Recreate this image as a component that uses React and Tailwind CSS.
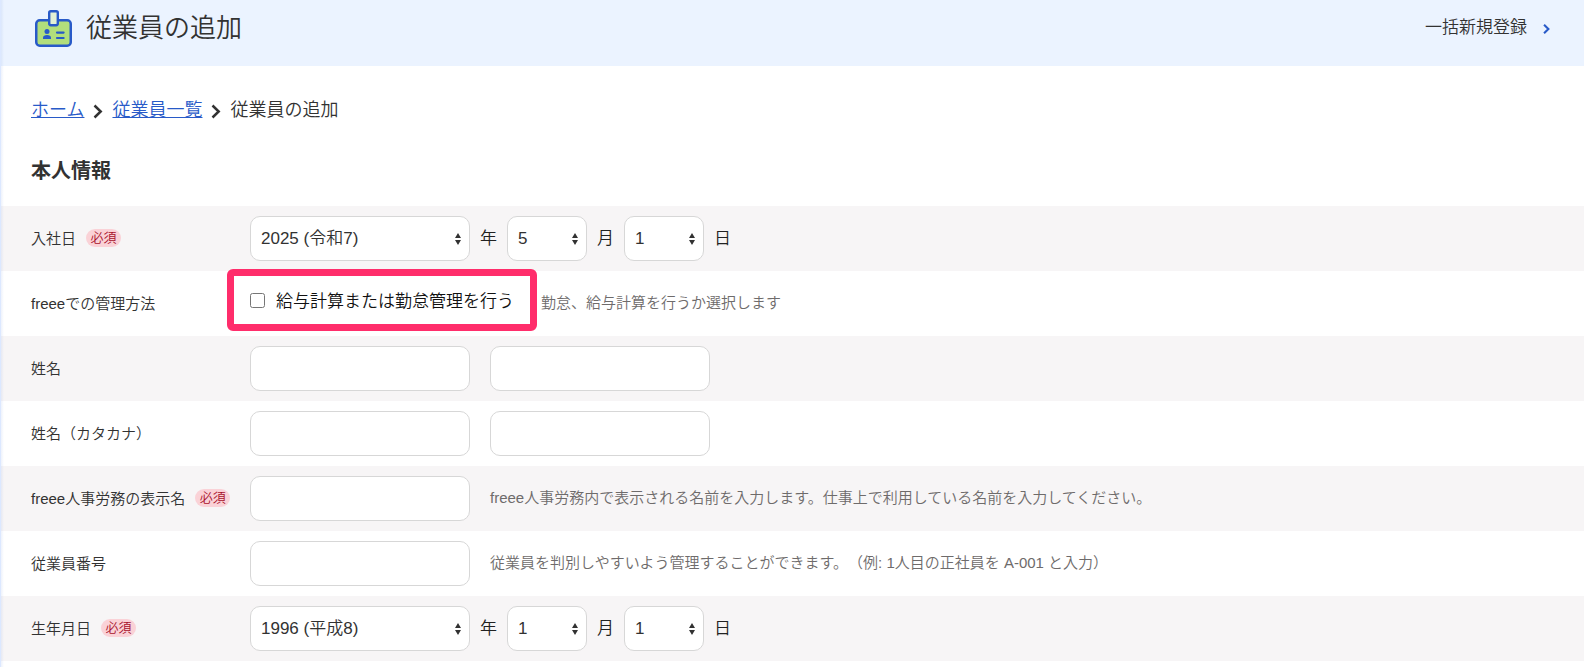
import React, { useState } from 'react';

const years = [
  { value: '2025', label: '2025 (令和7)' },
  { value: '2024', label: '2024 (令和6)' },
  { value: '1996', label: '1996 (平成8)' },
  { value: '1995', label: '1995 (平成7)' },
];
const months = Array.from({ length: 12 }, (_, i) => ({ value: `${i + 1}`, label: `${i + 1}` }));
const days = Array.from({ length: 31 }, (_, i) => ({ value: `${i + 1}`, label: `${i + 1}` }));

function BadgeIcon() {
  return (
    <svg width="37" height="37" viewBox="0 0 37 37" fill="none" className="shrink-0" aria-hidden="true">
      <rect x="1.25" y="10.25" width="34.5" height="25.5" rx="3.5" fill="#b2de7c" stroke="#285ac8" strokeWidth="2.5" />
      <rect x="14.2" y="1.2" width="8.6" height="14" rx="1.6" fill="#e3f1d5" stroke="#285ac8" strokeWidth="2.4" />
      <circle cx="12" cy="21.5" r="2.5" fill="#285ac8" />
      <path d="M8 29v-1.2c0-1.8 1.6-2.8 4-2.8s4 1 4 2.8V29z" fill="#285ac8" />
      <path d="M22 22.6h6.6M22 28h6.6" stroke="#285ac8" strokeWidth="2.2" strokeLinecap="round" />
    </svg>
  );
}

function Chevron({ className, width, height, strokeWidth }) {
  return (
    <svg width={width} height={height} viewBox="0 0 10 14" fill="none" className={className} aria-hidden="true">
      <path d="M1.5 1l6.2 6-6.2 6" stroke="currentColor" strokeWidth={strokeWidth} />
    </svg>
  );
}

function SelectBox({ label, options, value, onChange, className }) {
  return (
    <div className={`relative ${className}`}>
      <select
        aria-label={label}
        value={value}
        onChange={(e) => onChange(e.target.value)}
        className="h-[45px] w-full appearance-none rounded-[10px] border border-[#d7d7d7] bg-white pl-2.5 pr-5 text-[17px] text-[#323232]"
      >
        {options.map((option) => (
          <option key={option.value} value={option.value}>{option.label}</option>
        ))}
      </select>
      <svg width="6" height="12" viewBox="0 0 6 12" className="pointer-events-none absolute right-[9px] top-[17px]" aria-hidden="true">
        <path d="M3 0l3 5H0zM3 12L0 7h6z" fill="#323232" />
      </svg>
    </div>
  );
}

function DateFields({ name, initial }) {
  const [date, setDate] = useState(initial);

  return (
    <div className="flex items-center gap-2.5 text-[17px] leading-6 text-[#222222]">
      <SelectBox label={`${name} 年`} options={years} value={date.year} onChange={(year) => setDate(prev => ({ ...prev, year }))} className="w-[220px]" />
      <span>年</span>
      <SelectBox label={`${name} 月`} options={months} value={date.month} onChange={(month) => setDate(prev => ({ ...prev, month }))} className="w-20" />
      <span>月</span>
      <SelectBox label={`${name} 日`} options={days} value={date.day} onChange={(day) => setDate(prev => ({ ...prev, day }))} className="w-20" />
      <span>日</span>
    </div>
  );
}

function TextBox(props) {
  return (
    <input
      type="text"
      className="h-[45px] w-[220px] rounded-[10px] border border-[#d7d7d7] bg-white px-2.5 text-[17px] text-[#323232]"
      {...props}
    />
  );
}

function Hint({ children }) {
  return <p className="pb-0.5 text-[15px] leading-6 text-[#6e6b6b]">{children}</p>;
}

function Row({ label, htmlFor, required, children }) {
  const Label = htmlFor ? 'label' : 'span';
  return (
    <div className="flex h-[65px] items-center pl-[31px] odd:bg-[#f7f5f6]">
      <div className="flex w-[219px] shrink-0 items-center gap-2.5 whitespace-nowrap">
        <Label htmlFor={htmlFor} className="text-[15px] leading-6 text-[#323232]">{label}</Label>
        {required && (
          <span className="mb-0.5 h-[18px] w-[35px] rounded-full bg-[#fad2d7] text-center text-[13px] leading-[18px] text-[#a8112b]">必須</span>
        )}
      </div>
      <div className="flex items-center gap-5">{children}</div>
    </div>
  );
}

function App() {
  const [managed, setManaged] = useState(false);

  return (
    <div className="relative min-h-screen bg-white font-['Liberation_Sans','Noto_Sans_CJK_JP',sans-serif] font-[350] text-[#323232] [text-spacing-trim:space-all]" lang="ja">
      {/* Edge of the side menu */}
      <div className="absolute inset-y-0 left-0 w-1 border-l border-[#dce8ff] bg-linear-to-r from-[#285ac8]/8 to-transparent" />

      {/* Page header */}
      <header className="flex h-[66px] items-center justify-between bg-[#ebf3ff] pb-2.5 pl-[35px] pr-[34px]">
        <div className="flex items-center gap-3.5">
          <BadgeIcon />
          <h1 className="text-[26px] leading-9 font-[350]">従業員の追加</h1>
        </div>
        <a href="#bulk" className="flex items-center gap-4 text-[17px] leading-6">
          一括新規登録
          <Chevron width="7" height="10" strokeWidth="3" className="mt-0.5 text-[#285ac8]" />
        </a>
      </header>

      <main>
        {/* Breadcrumb */}
        <nav aria-label="パンくず" className="flex items-center gap-[9px] pl-[31px] pt-8 text-[18px] leading-6">
          <a href="#home" className="text-[#285ac8] underline">ホーム</a>
          <Chevron width="10" height="15" strokeWidth="2.5" className="mt-0.5" />
          <a href="#employees" className="text-[#285ac8] underline">従業員一覧</a>
          <Chevron width="10" height="15" strokeWidth="2.5" className="mt-0.5" />
          <span>従業員の追加</span>
        </nav>

        <h2 className="pb-[21px] pl-[31px] pt-[35px] text-[20px] leading-7 font-bold">本人情報</h2>

        <form>
          <Row label="入社日" required>
            <DateFields name="入社日" initial={{ year: '2025', month: '5', day: '1' }} />
          </Row>

          <Row label="freeeでの管理方法">
            <div className="relative w-[271px] pb-1">
              <label className="flex items-center gap-[11px] whitespace-nowrap text-[17px] leading-6 text-[#111111]">
                <input
                  type="checkbox"
                  checked={managed}
                  onChange={(e) => setManaged(e.target.checked)}
                  className="mb-0.5 size-[15px] shrink-0"
                />
                給与計算または勤怠管理を行う
              </label>
              {/* Highlight frame */}
              <div className="pointer-events-none absolute -bottom-[13px] -left-[23px] -right-4 -top-[21px] rounded-md border-[7px] border-[#ff2d6b]" />
            </div>
            <Hint>勤怠、給与計算を行うか選択します</Hint>
          </Row>

          <Row label="姓名" htmlFor="last-name">
            <TextBox id="last-name" />
            <TextBox aria-label="名" />
          </Row>

          <Row label="姓名（カタカナ）" htmlFor="last-name-kana">
            <TextBox id="last-name-kana" />
            <TextBox aria-label="名（カタカナ）" />
          </Row>

          <Row label="freee人事労務の表示名" htmlFor="display-name" required>
            <TextBox id="display-name" />
            <Hint>freee人事労務内で表示される名前を入力します。仕事上で利用している名前を入力してください。</Hint>
          </Row>

          <Row label="従業員番号" htmlFor="employee-number">
            <TextBox id="employee-number" />
            <Hint>従業員を判別しやすいよう管理することができます。（例: 1人目の正社員を A-001 と入力）</Hint>
          </Row>

          <Row label="生年月日" required>
            <DateFields name="生年月日" initial={{ year: '1996', month: '1', day: '1' }} />
          </Row>
        </form>
      </main>
    </div>
  );
}

export default App;
